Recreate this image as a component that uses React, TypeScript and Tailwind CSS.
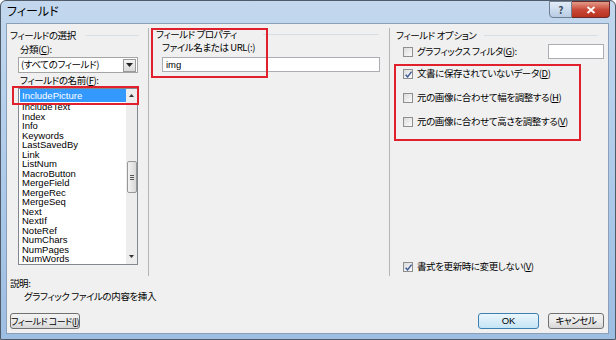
import type { ReactNode } from 'react'

const FIELDS = [
  'IncludeText',
  'Index',
  'Info',
  'Keywords',
  'LastSavedBy',
  'Link',
  'ListNum',
  'MacroButton',
  'MergeField',
  'MergeRec',
  'MergeSeq',
  'Next',
  'NextIf',
  'NoteRef',
  'NumChars',
  'NumPages',
  'NumWords',
]

function CheckBox({ checked }: { checked?: boolean }) {
  return (
    <span className="relative flex h-[10px] w-[10px] shrink-0 items-center justify-center border border-[#8e8f8f] bg-linear-to-br from-[#dcdcdc] to-[#fbfbfb]">
      {checked && (
        <svg viewBox="0 0 10 10" className="absolute h-[9px] w-[9px]">
          <path d="M1.8 5.2 L4 7.6 L8.4 1.8" fill="none" stroke="#3d5a96" strokeWidth="1.6" />
        </svg>
      )}
    </span>
  )
}

function CheckRow({ checked, children }: { checked?: boolean; children: ReactNode }) {
  return (
    <div className="flex h-[14px] items-center gap-[4px]">
      <CheckBox checked={checked} />
      <span className="whitespace-nowrap">{children}</span>
    </div>
  )
}

function GroupHeading({ label, lineStart }: { label: string; lineStart: number }) {
  return (
    <div className="flex h-[13px] items-center">
      <span className="whitespace-nowrap">{label}</span>
      <span className="h-px flex-1 bg-[#d5dfe5]" style={{ marginLeft: lineStart }} />
    </div>
  )
}

function Button({ children, focused, className }: { children: ReactNode; focused?: boolean; className: string }) {
  return (
    <div
      className={`flex h-[16px] items-center justify-center whitespace-nowrap rounded-[3px] border ${
        focused
          ? 'border-[#3c7fb1] bg-linear-to-b from-[#eaf6fd] to-[#c4e5f6]'
          : 'border-[#707070] bg-linear-to-b from-[#f2f2f2] via-[#ebebeb] to-[#d6d6d6]'
      } ${className}`}
    >
      {children}
    </div>
  )
}

export default function App() {
  return (
    <div className="relative h-[340px] w-[616px] overflow-hidden rounded-t-[6px] border border-[#4f5b69] bg-linear-to-b from-[#c3d8ee] via-[#aecbea] to-[#9dbde2] font-['Noto_Sans_CJK_JP',sans-serif] text-[9.5px] leading-none tracking-[-0.4px] text-black [font-feature-settings:'palt']">
      {/* title bar */}
      <div className="flex h-[21px] items-start">
        <span className="mt-[4px] ml-[6px] text-[12px] tracking-normal">フィールド</span>
        <div className="ml-auto mr-[5px] flex">
          <div className="flex h-[17px] w-[23px] items-center justify-center rounded-bl-[4px] border border-[#6f7f91] bg-linear-to-b from-[#e3ecf7] to-[#b7cce4] text-[10px] font-bold text-[#3a4a5e]">
            ?
          </div>
          <div className="flex h-[17px] w-[38px] items-center justify-center rounded-br-[4px] border border-l-0 border-[#6b2a2a] bg-linear-to-b from-[#e29a8a] via-[#c9493a] to-[#b8321f]">
            <svg viewBox="0 0 10 8" className="h-[8px] w-[10px]">
              <path d="M1.5 1 L8.5 7 M8.5 1 L1.5 7" stroke="white" strokeWidth="1.9" />
            </svg>
          </div>
        </div>
      </div>

      {/* client area */}
      <div className="ml-[5px] mr-[6px] mt-[1px] flex h-[311px] flex-col border border-[#8aa0b8] bg-[#f0f0f0]">
        <div className="flex h-[252px] pt-[4px]">
          {/* left column */}
          <div className="flex w-[141px] flex-col">
            <div className="pl-[3px] pr-[9px] pt-[1px]">
              <GroupHeading label="フィールドの選択" lineStart={10} />
            </div>
            <div className="mt-[2px] flex h-[12px] items-center pl-[13px]">
              分類(<span className="underline">C</span>):
            </div>
            <div className="ml-[11px] mt-[1px] flex h-[16px] w-[120px] items-center border border-[#a5a5a5] bg-white pl-[2px]">
              <span className="flex-1">(すべてのフィールド)</span>
              <span className="mr-px flex h-[13px] w-[13px] items-center justify-center border border-[#9a9a9a] bg-linear-to-b from-[#f4f4f4] to-[#d9d9d9]">
                <svg viewBox="0 0 7 4" className="h-[4px] w-[7px]">
                  <path d="M0 0 H7 L3.5 4 Z" fill="#222" />
                </svg>
              </span>
            </div>
            <div className="mt-[2px] flex h-[12px] items-center pl-[13px]">
              フィールドの名前(<span className="underline">F</span>):
            </div>
            <div className="relative ml-[11px] mt-[1px] flex h-[177px] w-[120px] border border-[#828790] bg-white font-['Liberation_Sans',sans-serif] tracking-normal">
              <div className="flex-1 overflow-hidden">
                <div className="ml-px flex h-[13px] items-center bg-[#3399ff] pl-[2px] text-white">IncludePicture</div>
                {FIELDS.map((f) => (
                  <div key={f} className="flex h-[9.5px] items-center pl-[3px] leading-[9.5px]">
                    {f}
                  </div>
                ))}
              </div>
              <div className="flex w-[11px] flex-col items-center bg-[#ededed]">
                <svg viewBox="0 0 5 3" className="mt-[5px] h-[3px] w-[5px]">
                  <path d="M0 3 H5 L2.5 0 Z" fill="#333" />
                </svg>
                <div className="mt-[64px] flex h-[32px] w-[10px] flex-col items-center justify-center gap-[1px] rounded-[2px] border border-[#979797] bg-linear-to-r from-[#f3f3f3] to-[#d8d8d8]">
                  <span className="h-px w-[4px] bg-[#555]" />
                  <span className="h-px w-[4px] bg-[#555]" />
                  <span className="h-px w-[4px] bg-[#555]" />
                </div>
                <svg viewBox="0 0 5 3" className="mt-auto mb-[6px] h-[3px] w-[5px]">
                  <path d="M0 0 H5 L2.5 3 Z" fill="#333" />
                </svg>
              </div>
              <div className="absolute -left-[7px] -top-[3px] h-[19px] w-[127px] border-2 border-[#e1202d]" />
            </div>
          </div>

          {/* middle column */}
          <div className="relative flex w-[241px] flex-col border-l border-[#b5b5b5]">
            <div className="pl-[7px] pr-[10px]">
              <GroupHeading label="フィールド プロパティ" lineStart={26} />
            </div>
            <div className="mt-[1px] flex h-[12px] items-center pl-[13px]">ファイル名または URL(:)</div>
            <div className="ml-[13px] mt-[3px] flex h-[15px] w-[218px] items-center border border-[#abadb3] bg-white pl-[3px] font-['Liberation_Sans',sans-serif] tracking-normal">
              img
            </div>
            <div className="absolute left-[2px] top-0 h-[50px] w-[117px] border-2 border-[#e1202d]" />
          </div>

          {/* right column */}
          <div className="relative flex flex-1 flex-col border-l border-[#b5b5b5]">
            <div className="pl-[6px] pr-[10px] pt-px">
              <GroupHeading label="フィールド オプション" lineStart={8} />
            </div>
            <div className="mt-[2px] flex items-center pl-[13px]">
              <CheckRow>
                グラフィックス フィルタ(<span className="underline">G</span>):
              </CheckRow>
              <div className="ml-auto mr-[4px] h-[15px] w-[56px] border border-[#abadb3] bg-white" />
            </div>
            <div className="mt-[8px] flex flex-col gap-[10px] pl-[13px]">
              <CheckRow checked>
                文書に保存されていないデータ(<span className="underline">D</span>)
              </CheckRow>
              <CheckRow>
                元の画像に合わせて幅を調整する(<span className="underline">H</span>)
              </CheckRow>
              <CheckRow>
                元の画像に合わせて高さを調整する(<span className="underline">V</span>)
              </CheckRow>
            </div>
            <div className="mt-auto mb-[2px] pl-[13px]">
              <CheckRow checked>
                書式を更新時に変更しない(<span className="underline">V</span>)
              </CheckRow>
            </div>
            <div className="absolute left-[4px] top-[36px] h-[77px] w-[187px] border-2 border-[#e1202d]" />
          </div>
        </div>

        <div className="mt-[2px] flex h-[12px] items-center pl-[3px]">説明:</div>
        <div className="mt-[1px] flex h-[12px] items-center pl-[17px]">グラフィック ファイルの内容を挿入</div>

        <div className="mt-auto mb-[4px] flex items-center">
          <Button className="ml-[3px] w-[70px] text-[9px] tracking-[-0.5px]">
            フィールド&nbsp;コード(<span className="underline">I</span>)
          </Button>
          <Button focused className="ml-auto w-[61px] font-['Liberation_Sans',sans-serif] tracking-normal">
            OK
          </Button>
          <Button className="ml-[9px] mr-[4px] w-[56px]">キャンセル</Button>
        </div>
      </div>
    </div>
  )
}
